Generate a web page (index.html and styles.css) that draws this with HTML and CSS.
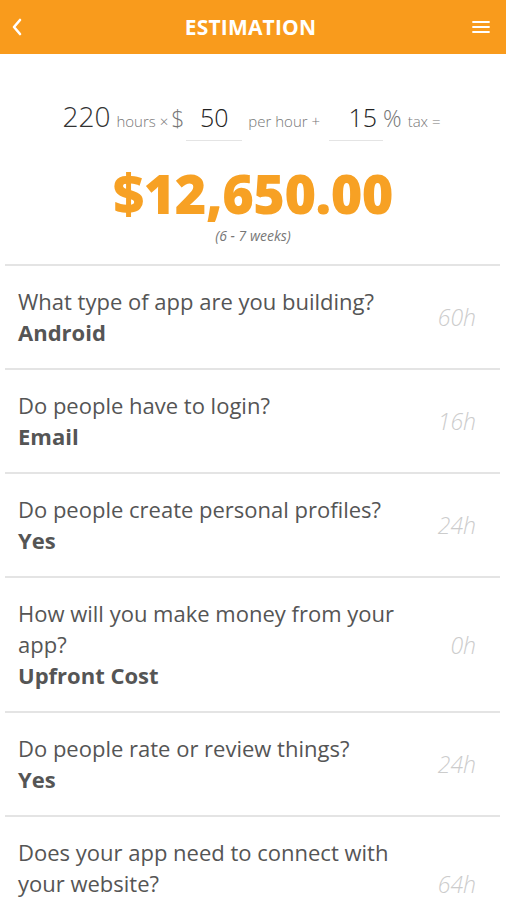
FILE: index.html
```html
<!DOCTYPE html>
<html lang="en">
<head>
    <meta charset="UTF-8">
    <meta name="viewport" content="width=device-width, initial-scale=1.0">
    <title>Estimation</title>
    <link rel="stylesheet" href="styles.css">
</head>
<body>
    <div class="navbar">
        <a href="#" class="nav-icon back">
            <svg width="12" height="18" viewBox="0 0 12 18"><path d="M9 2 L3 9 L9 16" fill="none" stroke="#fff" stroke-width="2.6" stroke-linecap="round" stroke-linejoin="round"/></svg>
        </a>
        <h1>ESTIMATION</h1>
        <a href="#" class="nav-icon menu">
            <svg width="18" height="14" viewBox="0 0 18 14"><path d="M1 2 H17 M1 7 H17 M1 12 H17" stroke="#fff" stroke-width="1.8" stroke-linecap="round"/></svg>
        </a>
    </div>

    <div class="summary">
        <div class="formula">
            <span class="big">220</span>
            <span class="small">hours ×</span><span class="mid">$</span>
            <span class="field">50</span>
            <span class="small">per hour +</span>
            <span class="field field-tax">15</span><span class="mid pct">%</span>
            <span class="small">tax =</span>
        </div>
        <div class="total">$12,650.00</div>
        <div class="weeks">(6 - 7 weeks)</div>
    </div>

    <div class="list">
        <div class="row">
            <div class="q">
                <p class="question">What type of app are you building?</p>
                <p class="answer">Android</p>
            </div>
            <span class="hours">60h</span>
        </div>
        <div class="row">
            <div class="q">
                <p class="question">Do people have to login?</p>
                <p class="answer">Email</p>
            </div>
            <span class="hours">16h</span>
        </div>
        <div class="row">
            <div class="q">
                <p class="question">Do people create personal profiles?</p>
                <p class="answer">Yes</p>
            </div>
            <span class="hours">24h</span>
        </div>
        <div class="row">
            <div class="q">
                <p class="question">How will you make money from your app?</p>
                <p class="answer">Upfront Cost</p>
            </div>
            <span class="hours">0h</span>
        </div>
        <div class="row">
            <div class="q">
                <p class="question">Do people rate or review things?</p>
                <p class="answer">Yes</p>
            </div>
            <span class="hours">24h</span>
        </div>
        <div class="row">
            <div class="q">
                <p class="question">Does your app need to connect with your website?</p>
                <p class="answer">Yes</p>
            </div>
            <span class="hours">64h</span>
        </div>
    </div>
</body>
</html>
```

FILE: styles.css
```css
body {
    font-family: "Open Sans", Lato, sans-serif;
    background-color: #fff;
    margin: 0;
    color: #555;
}
.navbar {
    display: flex;
    align-items: center;
    justify-content: space-between;
    height: 54px;
    padding: 0 16px 0 11px;
    background-color: #F99B1C;
}
.navbar h1 {
    margin: 0;
    color: #fff;
    font-size: 21px;
    font-weight: 700;
    letter-spacing: 0.2px;
}
.nav-icon {
    display: flex;
    width: 18px;
}
.summary {
    box-sizing: border-box;
    height: 210px;
    padding-top: 43px;
    text-align: center;
}
.formula {
    display: flex;
    justify-content: center;
    align-items: baseline;
    color: #333;
}
.big {
    font-size: 28px;
    font-weight: 300;
    margin-right: 6px;
}
.small {
    font-size: 15px;
    font-weight: 300;
    color: #777;
    margin-right: 3px;
}
.mid {
    font-size: 23px;
    font-weight: 300;
    color: #777;
}
.pct {
    margin-right: 6px;
}
.field {
    display: inline-block;
    width: 56px;
    margin: 0 6px 0 2px;
    padding-bottom: 6px;
    border-bottom: 1px solid #e4e4e4;
    font-size: 25px;
    font-weight: 300;
    color: #222;
}
.field-tax {
    margin: 0 0 0 6px;
    width: 48px;
    text-align: right;
    padding-right: 6px;
}
.total {
    margin-top: 23px;
    font-size: 54px;
    font-weight: 800;
    color: #F7A124;
    line-height: 58px;
    letter-spacing: -0.5px;
}
.weeks {
    margin-top: 4px;
    font-size: 14px;
    font-style: italic;
    font-weight: 400;
    color: #777;
}
.list {
    margin: 0 6px 0 5px;
}
.row {
    display: flex;
    align-items: center;
    justify-content: space-between;
    padding: 20px 24px 20px 13px;
    border-top: 2px solid #e4e4e4;
}
.q {
    max-width: 392px;
}
.question, .answer {
    margin: 0;
    font-size: 22px;
    line-height: 31px;
}
.question {
    font-weight: 400;
    color: #555;
}
.answer {
    font-weight: 700;
    color: #555;
}
.hours {
    font-size: 23px;
    font-style: italic;
    font-weight: 300;
    color: #ccc;
}
```
